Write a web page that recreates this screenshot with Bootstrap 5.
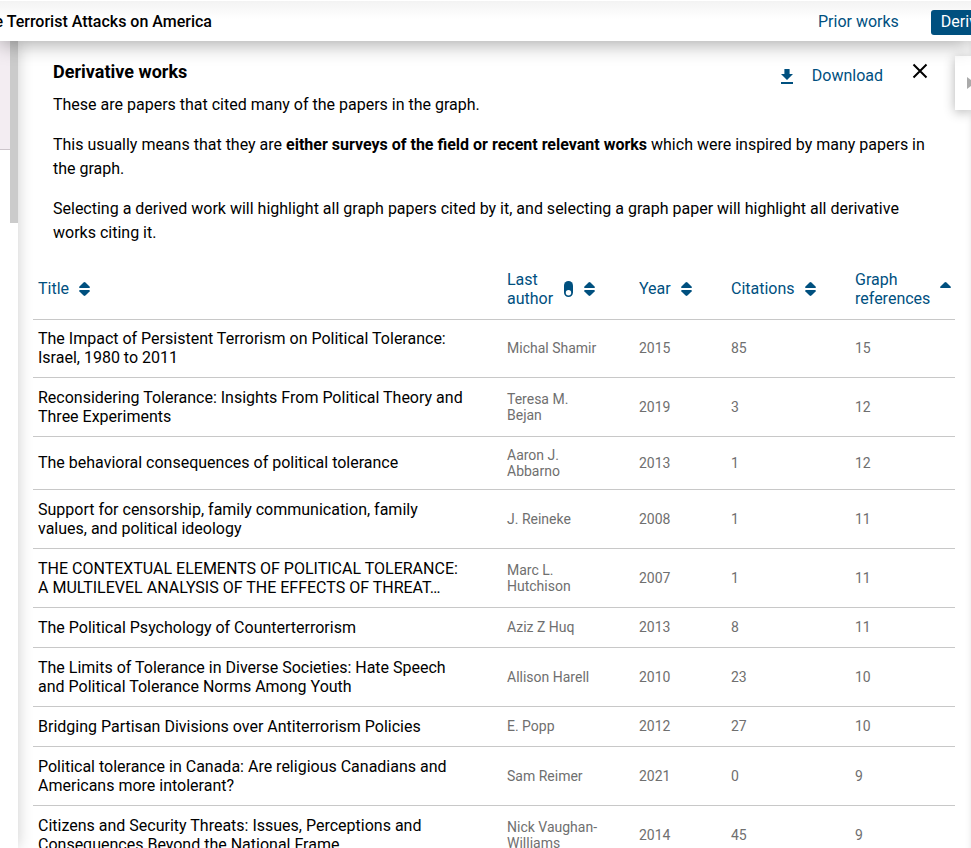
<!DOCTYPE html>
<html lang="en">
<head>
<meta charset="utf-8">
<meta name="viewport" content="width=device-width, initial-scale=1">
<title>Derivative works</title>
<link href="https://cdn.jsdelivr.net/npm/bootstrap@5.3.0/dist/css/bootstrap.min.css" rel="stylesheet">
<style>
  :root { --brand: #00507f; }
  body { font-family: Roboto, "Liberation Sans", sans-serif; font-size: 16px; line-height: 24px; color: #000; background: #fff; }
  .topbar { z-index: 3; height: 41px; padding-top: 2px; background: linear-gradient(#f3f3f3, #fff 18px); border-top: 1px solid #fff; box-shadow: 0 3px 20px rgba(0,0,0,.35); }
  .origin-title { width: 212px; font-weight: 500; }
  .works-nav { width: 153px; gap: 32px; }
  .works-nav a, .tool-btn, .sort-btn { color: var(--brand); }
  .works-nav .current { background: var(--brand); color: #fff; border-radius: 3px; padding: 0 10px 1px; }
  .paper-strip { z-index: 2; width: 18px; box-shadow: 0 0 16px rgba(0,0,0,.2); background: #fff; }
  .strip-item { height: 109px; background: #f3edf2; border-bottom: 1px solid #ccc5cb; }
  .strip-thumb { width: 8px; height: 182px; background: #cbcbcb; }
  .works-panel { padding: 18px 16px 0 15px; box-shadow: inset -6px 0 6px -6px rgba(0,0,0,.1); }
  .intro { padding: 0 20px; }
  .intro h1 { font-size: 18px; line-height: 26px; font-weight: 700; margin-bottom: 8px; }
  .intro p { margin-bottom: 16px; }
  .intro p:last-child { margin-bottom: 14px; }
  .tools { padding-right: 7px; gap: 29px; }
  .tool-btn { gap: 19px; margin-top: 5px; }
  .works-table { table-layout: fixed; line-height: 19px; }
  .works-table th, .works-table td { padding: 10px 5px; vertical-align: middle; font-weight: 400; border-bottom: 1px solid #c8c8c8; }
  .works-table thead th { height: 60px; color: var(--brand); }
  .works-table tbody tr:first-child > * { padding-top: 9px; }
  .works-table td { color: #6f6f6f; font-size: 14px; line-height: 16px; }
  .sort-btn { gap: 10px; line-height: 19px; text-align: left; }
  .c-author { width: 132px; } .c-year { width: 92px; } .c-cites { width: 124px; } .c-refs { width: 105px; }
  .works-table .author-name { padding-right: 32px; }
  .works-table .paper-title { padding-right: 35px; }
  .side-toggle { z-index: 2; top: 15px; right: 0; width: 16px; height: 54px; background: #fff; box-shadow: 0 2px 12px rgba(0,0,0,.3); }
</style>
<script src="https://cdn.jsdelivr.net/npm/bootstrap@5.3.0/dist/js/bootstrap.bundle.min.js"></script>
</head>
<body class="vh-100 overflow-hidden d-flex flex-column">
<svg class="d-none" aria-hidden="true">
  <symbol id="sort" viewBox="0 0 11 14"><path d="M4.6.4Q5.5-.3 6.4.4L10.6 4.6Q11.2 6 10 6H1Q-.2 6 .4 4.6Z"/><path d="M1 8H10Q11.2 8 10.6 9.4L6.4 13.6Q5.5 14.3 4.6 13.6L.4 9.4Q-.2 8 1 8Z"/></symbol>
  <symbol id="sort-up" viewBox="0 0 11 14"><path d="M4.6.4Q5.5-.3 6.4.4L10.6 4.6Q11.2 6 10 6H1Q-.2 6 .4 4.6Z"/></symbol>
</svg>
<header class="topbar position-relative flex-shrink-0 d-flex align-items-center justify-content-between">
  <div class="origin-title d-flex justify-content-end overflow-hidden text-nowrap">e Terrorist Attacks on America</div>
  <nav class="works-nav d-flex text-nowrap overflow-hidden" aria-label="Related works">
    <a class="text-decoration-none" href="#prior">Prior works</a>
    <a class="current text-decoration-none" href="#derivative" aria-current="page">Derivative works</a>
  </nav>
</header>
<div class="position-relative d-flex flex-grow-1 overflow-hidden">
  <aside class="paper-strip position-relative flex-shrink-0 d-flex">
    <div class="strip-item flex-grow-1"></div>
    <div class="strip-thumb"></div>
  </aside>
  <main class="works-panel flex-grow-1 overflow-hidden">
    <section class="intro">
      <div class="d-flex justify-content-between align-items-start">
        <h1>Derivative works</h1>
        <div class="tools d-flex align-items-start">
          <button type="button" class="tool-btn d-flex align-items-center border-0 bg-transparent p-0">
            <svg width="12" height="15" viewBox="0 0 12 15" fill="currentColor" aria-hidden="true"><path d="M3.4 0h5.2v5H12L6 11 0 5h3.4zM0 13h12v2H0z"/></svg>
            Download
          </button>
          <button type="button" class="border-0 bg-transparent p-0 d-flex pt-1" aria-label="Close">
            <svg width="16" height="16" viewBox="0 0 16 16" fill="none" stroke="#000" stroke-width="2" aria-hidden="true"><path d="M1.5 1.5l13 13M14.5 1.5l-13 13"/></svg>
          </button>
        </div>
      </div>
      <p>These are papers that cited many of the papers in the graph.</p>
      <p>This usually means that they are <b>either surveys of the field or recent relevant works</b> which were inspired by many papers in the graph.</p>
      <p>Selecting a derived work will highlight all graph papers cited by it, and selecting a graph paper will highlight all derivative works citing it.</p>
    </section>
    <table class="works-table w-100">
      <colgroup><col><col class="c-author"><col class="c-year"><col class="c-cites"><col class="c-refs"></colgroup>
      <thead>
        <tr>
          <th scope="col"><button type="button" class="sort-btn d-flex align-items-center border-0 bg-transparent p-0">Title <svg width="11" height="14" fill="currentColor" aria-hidden="true"><use href="#sort"/></svg></button></th>
          <th scope="col"><button type="button" class="sort-btn d-flex align-items-center border-0 bg-transparent p-0"><span>Last<br>author</span>
            <svg width="11" height="16" viewBox="0 0 11 16" aria-hidden="true"><rect x="1" width="9" height="16" rx="4.5" fill="#00507f"/><circle cx="5.5" cy="11.7" r="2.7" fill="#fff"/></svg>
            <svg width="11" height="14" fill="currentColor" aria-hidden="true"><use href="#sort"/></svg></button></th>
          <th scope="col"><button type="button" class="sort-btn d-flex align-items-center border-0 bg-transparent p-0">Year <svg width="11" height="14" fill="currentColor" aria-hidden="true"><use href="#sort"/></svg></button></th>
          <th scope="col"><button type="button" class="sort-btn d-flex align-items-center border-0 bg-transparent p-0">Citations <svg width="11" height="14" fill="currentColor" aria-hidden="true"><use href="#sort"/></svg></button></th>
          <th scope="col" aria-sort="descending"><button type="button" class="sort-btn d-flex align-items-center border-0 bg-transparent p-0"><span>Graph<br>references</span> <svg width="11" height="14" fill="currentColor" aria-hidden="true"><use href="#sort-up"/></svg></button></th>
        </tr>
      </thead>
      <tbody>
        <tr><th scope="row" class="paper-title">The Impact of Persistent Terrorism on Political Tolerance: Israel, 1980 to 2011</th><td class="author-name">Michal Shamir</td><td>2015</td><td>85</td><td>15</td></tr>
        <tr><th scope="row" class="paper-title">Reconsidering Tolerance: Insights From Political Theory and Three Experiments</th><td class="author-name">Teresa M. Bejan</td><td>2019</td><td>3</td><td>12</td></tr>
        <tr><th scope="row" class="paper-title">The behavioral consequences of political tolerance</th><td class="author-name">Aaron J. Abbarno</td><td>2013</td><td>1</td><td>12</td></tr>
        <tr><th scope="row" class="paper-title">Support for censorship, family communication, family values, and political ideology</th><td class="author-name">J. Reineke</td><td>2008</td><td>1</td><td>11</td></tr>
        <tr><th scope="row" class="paper-title">THE CONTEXTUAL ELEMENTS OF POLITICAL TOLERANCE: A MULTILEVEL ANALYSIS OF THE EFFECTS OF THREAT…</th><td class="author-name">Marc L. Hutchison</td><td>2007</td><td>1</td><td>11</td></tr>
        <tr><th scope="row" class="paper-title">The Political Psychology of Counterterrorism</th><td class="author-name">Aziz Z Huq</td><td>2013</td><td>8</td><td>11</td></tr>
        <tr><th scope="row" class="paper-title">The Limits of Tolerance in Diverse Societies: Hate Speech and Political Tolerance Norms Among Youth</th><td class="author-name">Allison Harell</td><td>2010</td><td>23</td><td>10</td></tr>
        <tr><th scope="row" class="paper-title">Bridging Partisan Divisions over Antiterrorism Policies</th><td class="author-name">E. Popp</td><td>2012</td><td>27</td><td>10</td></tr>
        <tr><th scope="row" class="paper-title">Political tolerance in Canada: Are religious Canadians and Americans more intolerant?</th><td class="author-name">Sam Reimer</td><td>2021</td><td>0</td><td>9</td></tr>
        <tr><th scope="row" class="paper-title">Citizens and Security Threats: Issues, Perceptions and Consequences Beyond the National Frame</th><td class="author-name">Nick Vaughan-Williams</td><td>2014</td><td>45</td><td>9</td></tr>
      </tbody>
    </table>
  </main>
  <button type="button" class="side-toggle position-absolute border-0 p-0 d-flex align-items-center justify-content-end" aria-label="Show details">
    <svg width="4" height="12" viewBox="0 0 4 12" fill="#aaa" aria-hidden="true"><path d="M0 0l8 6-8 6z"/></svg>
  </button>
</div>
</body>
</html>
